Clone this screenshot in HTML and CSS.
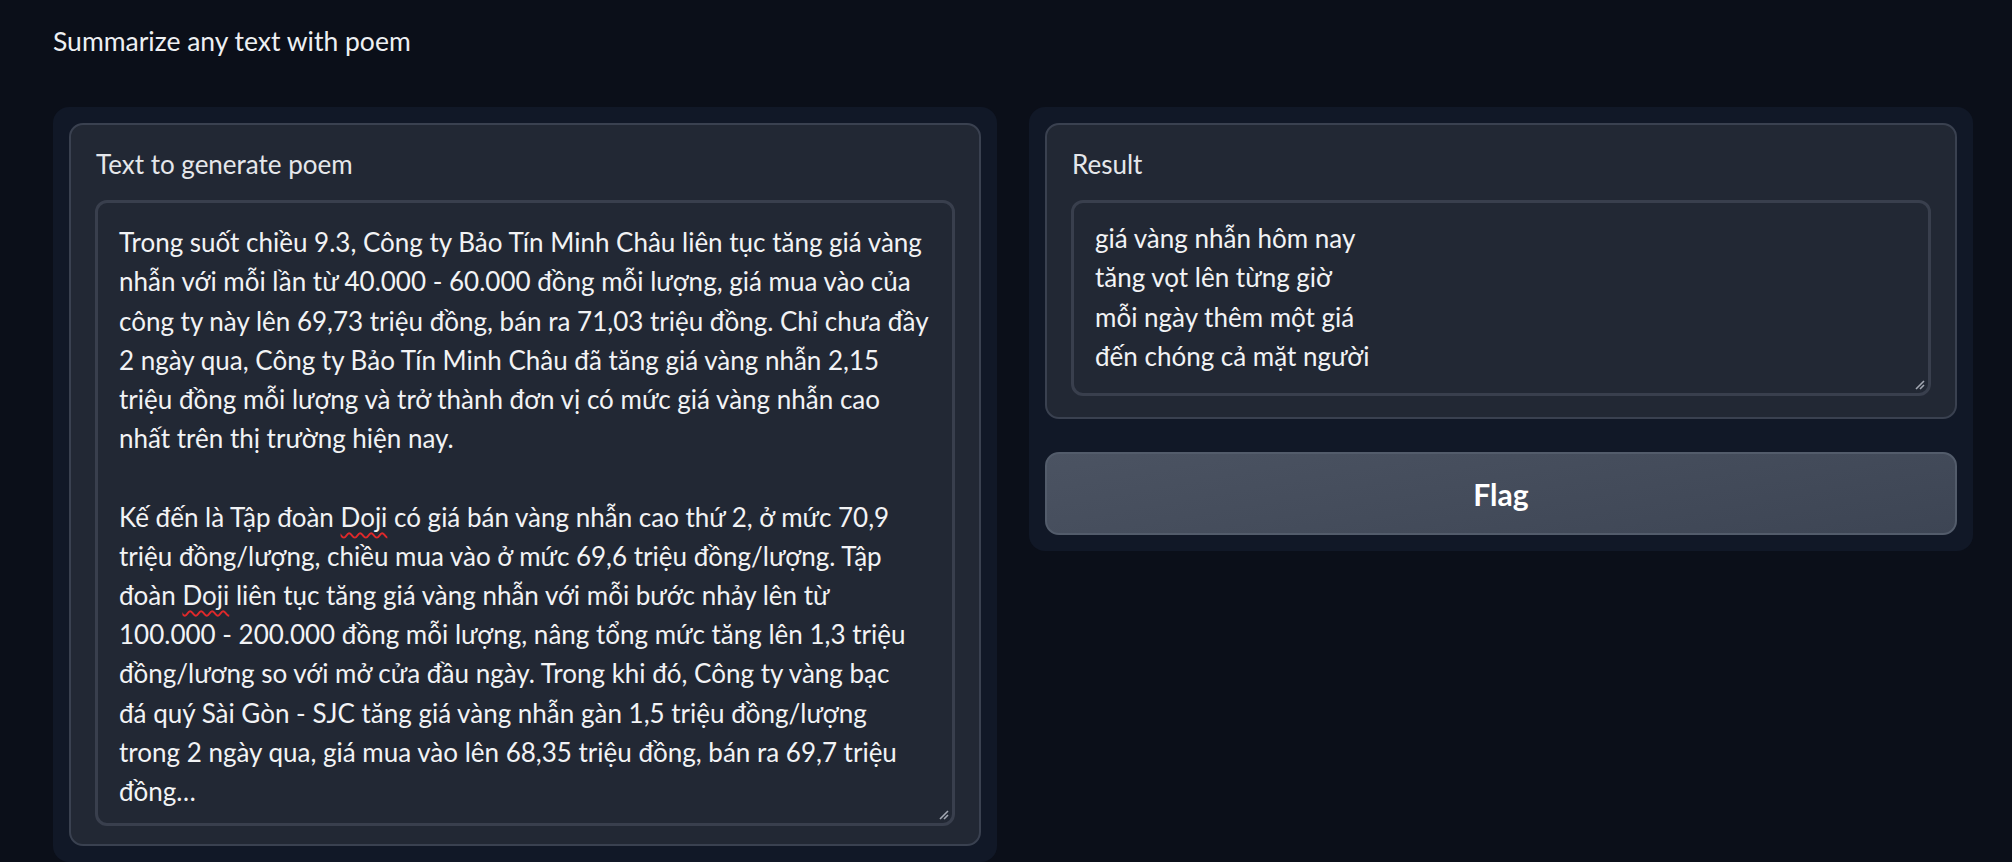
FILE: index.html
```html
<!DOCTYPE html>
<html lang="vi">
<head>
<meta charset="utf-8">
<title>Summarize any text with poem</title>
<link rel="stylesheet" href="styles.css">
</head>
<body>
<div class="app">
  <div class="title">Summarize any text with poem</div>
  <div class="row">
    <div class="panel panel-left">
      <div class="block">
        <div class="label">Text to generate poem</div>
        <div class="textbox textbox-tall" role="textbox" aria-multiline="true">
          <div class="lines">Trong suốt chiều 9.3, Công ty Bảo Tín Minh Châu liên tục tăng giá vàng<br>nhẫn với mỗi lần từ 40.000 - 60.000 đồng mỗi lượng, giá mua vào của<br>công ty này lên 69,73 triệu đồng, bán ra 71,03 triệu đồng. Chỉ chưa đầy<br>2 ngày qua, Công ty Bảo Tín Minh Châu đã tăng giá vàng nhẫn 2,15<br>triệu đồng mỗi lượng và trở thành đơn vị có mức giá vàng nhẫn cao<br>nhất trên thị trường hiện nay.<br><br>Kế đến là Tập đoàn <span class="misspelled">Doji</span> có giá bán vàng nhẫn cao thứ 2, ở mức 70,9<br>triệu đồng/lượng, chiều mua vào ở mức 69,6 triệu đồng/lượng. Tập<br>đoàn <span class="misspelled">Doji</span> liên tục tăng giá vàng nhẫn với mỗi bước nhảy lên từ<br>100.000 - 200.000 đồng mỗi lượng, nâng tổng mức tăng lên 1,3 triệu<br>đồng/lương so với mở cửa đầu ngày. Trong khi đó, Công ty vàng bạc<br>đá quý Sài Gòn - SJC tăng giá vàng nhẫn gàn 1,5 triệu đồng/lượng<br>trong 2 ngày qua, giá mua vào lên 68,35 triệu đồng, bán ra 69,7 triệu<br>đồng…</div>
          <svg class="grip" width="12" height="12" viewBox="0 0 12 12"><path d="M11 3 L3 11 M11 7 L7 11" stroke="#a3a8b3" stroke-width="1.6" fill="none"/></svg>
        </div>
      </div>
    </div>
    <div class="panel panel-right">
      <div class="block block-result">
        <div class="label">Result</div>
        <div class="textbox textbox-short" role="textbox" aria-multiline="true">
          <div class="lines">giá vàng nhẫn hôm nay<br>tăng vọt lên từng giờ<br>mỗi ngày thêm một giá<br>đến chóng cả mặt người</div>
          <svg class="grip" width="12" height="12" viewBox="0 0 12 12"><path d="M11 3 L3 11 M11 7 L7 11" stroke="#a3a8b3" stroke-width="1.6" fill="none"/></svg>
        </div>
      </div>
      <button class="flag" type="button">Flag</button>
    </div>
  </div>
</div>
</body>
</html>
```

FILE: styles.css
```css
* { box-sizing: border-box; }
html, body {
  margin: 0;
  padding: 0;
  background: #0b0f19;
  height: 100%;
  overflow: hidden;
}
body {
  font-family: "Lato", "Liberation Sans", sans-serif;
  color: #e8eaee;
  font-size: 26px;
  line-height: 39.2px;
}
.app {
  padding: 22px 39px 0 53px;
}
.title {
  height: 39px;
  margin-bottom: 46px;
  color: #eef0f3;
  font-size: 26.5px;
}
.row {
  display: flex;
  gap: 32px;
  align-items: flex-start;
}
.panel {
  flex: 1 1 0;
  background: #111827;
  border-radius: 16px;
  padding: 16px;
  display: flex;
  flex-direction: column;
  gap: 33px;
}
.block {
  background: #222834;
  border: 2px solid #3a4150;
  border-radius: 14px;
  padding: 20px 24px 18px 24px;
  display: flex;
  flex-direction: column;
  gap: 16px;
}
.block-result {
  padding-bottom: 21px;
}
.label {
  color: #e5e7eb;
  padding-left: 1px;
}
.textbox {
  position: relative;
  border: 3px solid #393f4d;
  border-radius: 12px;
  background: #222834;
  padding: 20px 22px 10px 21px;
  color: #f2f3f5;
  white-space: nowrap;
}
.textbox-tall { height: 626px; }
.textbox-short { height: 196px; padding-top: 16px; }
.misspelled {
  text-decoration: underline wavy #e0282a;
  text-decoration-thickness: 1.5px;
  text-underline-offset: 5px;
}
.grip {
  position: absolute;
  right: 3px;
  bottom: 3px;
}
.flag {
  height: 83px;
  border-radius: 14px;
  border: 2px solid #535c6b;
  background: linear-gradient(170deg, #4b5362 0%, #3d4554 100%);
  color: #ffffff;
  font-family: inherit;
  font-size: 30px;
  font-weight: 700;
}
```
